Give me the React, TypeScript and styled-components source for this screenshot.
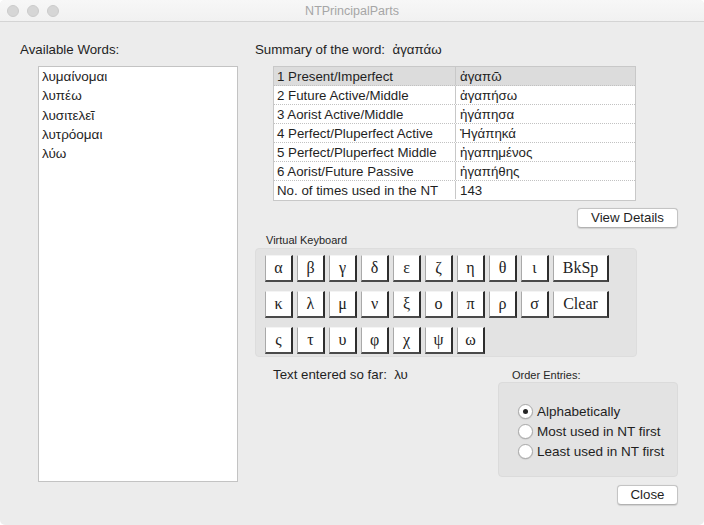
import React from "react";
import styled, { createGlobalStyle } from "styled-components";

const Global = createGlobalStyle`
  html, body { margin: 0; padding: 0; background: #ffffff; }
  body {
    font-family: "Liberation Sans", "DejaVu Sans", sans-serif;
    font-size: 13.3px;
    color: #1f1f1f;
  }
  * { box-sizing: border-box; }
`;

const Window = styled.div`
  width: 704px;
  height: 525px;
  background: #ececec;
  display: flex;
  flex-direction: column;
  overflow: hidden;
  border-radius: 5px;
`;

const TitleBar = styled.div`
  height: 22px;
  flex: none;
  display: grid;
  grid-template-columns: 1fr auto 1fr;
  align-items: center;
  background: linear-gradient(#f7f7f7, #f1f1f1);
  border-bottom: 1px solid #d4d4d4;
`;

const Lights = styled.div`
  display: flex;
  gap: 8px;
  padding-left: 7px;
`;

const Light = styled.span`
  width: 12px;
  height: 12px;
  border-radius: 50%;
  background: #d6d6d6;
  border: 1px solid #cbcbcb;
`;

const Title = styled.div`
  font-size: 12.5px;
  color: #a6a6a6;
  line-height: 16px;
`;

const Content = styled.div`
  flex: 1;
  display: flex;
  padding: 20px 26px 0 20px;
`;

const LeftColumn = styled.div`
  width: 218px;
  display: flex;
  flex-direction: column;
`;

const Label = styled.div`
  line-height: 16px;
  white-space: pre;
`;

const WordList = styled.div`
  margin: 8px 0 0 18px;
  width: 200px;
  height: 416px;
  background: #ffffff;
  border: 1px solid #c3c3c3;
  padding: 0 0 0 3px;
`;

const WordItem = styled.div`
  line-height: 19.3px;
  font-size: 13.5px;
`;

const RightColumn = styled.div`
  flex: 1;
  margin-left: 17px;
  display: flex;
  flex-direction: column;
`;

const Table = styled.div`
  margin: 8px 0 0 18px;
  width: 363px;
  border: 1px solid #c8c8c8;
  background: #ffffff;
`;

const TableRow = styled.div<{ $head?: boolean; $last?: boolean }>`
  display: grid;
  grid-template-columns: 182px 1fr;
  height: 19px;
  background: ${(p) => (p.$head ? "#dcdcdc" : "#ffffff")};
  border-bottom: ${(p) => (p.$last ? "none" : "1px dotted #c2c2c2")};
`;

const Cell = styled.div<{ $first?: boolean }>`
  line-height: 20px;
  height: 18px;
  padding-left: ${(p) => (p.$first ? "3px" : "4px")};
  border-right: ${(p) => (p.$first ? "1px solid #c8c8c8" : "none")};
  white-space: nowrap;
`;

const ButtonRow = styled.div<{ $top: number }>`
  display: flex;
  justify-content: flex-end;
  margin-top: ${(p) => p.$top}px;
`;

const PushButton = styled.button<{ $w: number }>`
  width: ${(p) => p.$w}px;
  height: 20px;
  padding: 0;
  background: #ffffff;
  border: 1px solid #c4c4c4;
  border-bottom-color: #b2b2b2;
  border-radius: 4px;
  box-shadow: 0 0.5px 1px rgba(0, 0, 0, 0.12);
  font-family: inherit;
  font-size: 13.3px;
  color: #1f1f1f;
  line-height: 18px;
`;

const SmallLabel = styled.div<{ $left: number }>`
  font-size: 11px;
  line-height: 14px;
  margin-left: ${(p) => p.$left}px;
  color: #262626;
`;

const KeyboardLabel = styled(SmallLabel)`
  margin-top: 5px;
  margin-bottom: 1px;
`;

const KeyPanel = styled.div`
  width: 382px;
  height: 109px;
  background: #e3e3e3;
  border: 1px solid #dddddd;
  border-radius: 4px;
  padding: 6px 0 0 9px;
  display: flex;
  flex-direction: column;
  gap: 9px;
`;

const KeyRow = styled.div`
  display: flex;
  gap: 4px;
`;

const Key = styled.button<{ $wide?: boolean }>`
  width: ${(p) => (p.$wide ? 56 : 28)}px;
  height: 27px;
  padding: 0;
  background: #ffffff;
  border-top: 1px solid #f4f4f4;
  border-left: 1px solid #a9a9a9;
  border-right: 2px solid #2e2e2e;
  border-bottom: 2px solid #4a4a4a;
  font-family: "Liberation Serif", "DejaVu Serif", serif;
  font-size: 16px;
  color: #222222;
  line-height: 22px;
`;

const Bottom = styled.div`
  display: flex;
  margin-top: 10px;
`;

const Entered = styled.div`
  margin-left: 18px;
  line-height: 16px;
  white-space: pre;
`;

const OrderGroup = styled.div`
  margin-left: auto;
  width: 180px;
  display: flex;
  flex-direction: column;
`;

const OrderLabel = styled(SmallLabel)`
  margin-top: 1px;
`;

const OrderPanel = styled.div`
  height: 95px;
  background: #e3e3e3;
  border: 1px solid #dbdbdb;
  border-radius: 4px;
  padding: 18px 0 0 19px;
  display: flex;
  flex-direction: column;
`;

const RadioRow = styled.label`
  height: 20px;
  display: flex;
  align-items: center;
  font-size: 13.5px;
  color: #1f1f1f;
`;

const RadioCircle = styled.span<{ $on?: boolean }>`
  width: 15px;
  height: 15px;
  border-radius: 50%;
  background: #ffffff;
  border: 1px solid #a9a9a9;
  box-shadow: 0 0.5px 1px rgba(0, 0, 0, 0.15);
  display: flex;
  align-items: center;
  justify-content: center;
  margin-right: 4px;
  &::after {
    content: "";
    width: 5px;
    height: 5px;
    border-radius: 50%;
    background: ${(p) => (p.$on ? "#262626" : "transparent")};
  }
`;

const words = ["λυμαίνομαι", "λυπέω", "λυσιτελεῖ", "λυτρόομαι", "λύω"];

const rows: [string, string][] = [
  ["1 Present/Imperfect", "ἀγαπῶ"],
  ["2 Future Active/Middle", "ἀγαπήσω"],
  ["3 Aorist Active/Middle", "ἠγάπησα"],
  ["4 Perfect/Pluperfect Active", "Ἠγάπηκά"],
  ["5 Perfect/Pluperfect Middle", "ἠγαπημένος"],
  ["6 Aorist/Future Passive", "ἠγαπήθης"],
  ["No. of times used in the NT", "143"],
];

const keyRows: string[][] = [
  ["α", "β", "γ", "δ", "ε", "ζ", "η", "θ", "ι", "BkSp"],
  ["κ", "λ", "μ", "ν", "ξ", "ο", "π", "ρ", "σ", "Clear"],
  ["ς", "τ", "υ", "φ", "χ", "ψ", "ω"],
];

const orders = ["Alphabetically", "Most used in NT first", "Least used in NT first"];

export default function App() {
  return (
    <>
      <Global />
      <Window>
        <TitleBar>
          <Lights>
            <Light />
            <Light />
            <Light />
          </Lights>
          <Title>NTPrincipalParts</Title>
          <div />
        </TitleBar>
        <Content>
          <LeftColumn>
            <Label>Available Words:</Label>
            <WordList>
              {words.map((w) => (
                <WordItem key={w}>{w}</WordItem>
              ))}
            </WordList>
          </LeftColumn>
          <RightColumn>
            <Label>{"Summary of the word:  ἀγαπάω"}</Label>
            <Table>
              {rows.map(([a, b], i) => (
                <TableRow key={a} $head={i === 0} $last={i === rows.length - 1}>
                  <Cell $first>{a}</Cell>
                  <Cell>{b}</Cell>
                </TableRow>
              ))}
            </Table>
            <ButtonRow $top={7}>
              <PushButton $w={101}>View Details</PushButton>
            </ButtonRow>
            <KeyboardLabel $left={11}>Virtual Keyboard</KeyboardLabel>
            <KeyPanel>
              {keyRows.map((r, i) => (
                <KeyRow key={i}>
                  {r.map((k) => (
                    <Key key={k} $wide={k.length > 1}>
                      {k}
                    </Key>
                  ))}
                </KeyRow>
              ))}
            </KeyPanel>
            <Bottom>
              <Entered>{"Text entered so far:  λυ"}</Entered>
              <OrderGroup>
                <OrderLabel $left={14}>Order Entries:</OrderLabel>
                <OrderPanel>
                  {orders.map((o, i) => (
                    <RadioRow key={o}>
                      <RadioCircle $on={i === 0} />
                      {o}
                    </RadioRow>
                  ))}
                </OrderPanel>
                <ButtonRow $top={8}>
                  <PushButton $w={61}>Close</PushButton>
                </ButtonRow>
              </OrderGroup>
            </Bottom>
          </RightColumn>
        </Content>
      </Window>
    </>
  );
}
